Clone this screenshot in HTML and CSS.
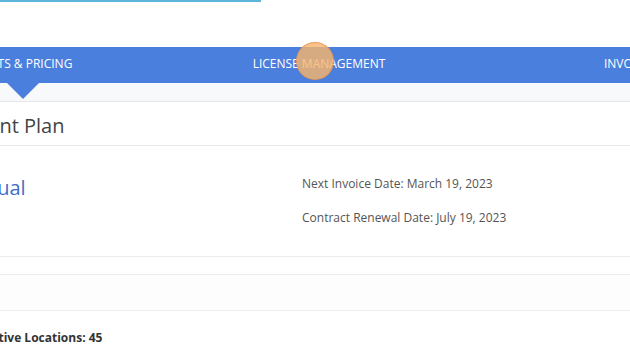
FILE: index.html
```html
<!DOCTYPE html>
<html lang="en">
<head>
<meta charset="UTF-8">
<title>Account</title>
<link rel="stylesheet" href="styles.css">
</head>
<body>
  <div class="progress"></div>

  <nav class="tabs">
    <a class="tab tab-first">Products &amp; Pricing</a>
    <a class="tab tab-mid">License Management</a>
    <a class="tab tab-last">Invoices</a>
  </nav>
  <div class="subbar">
    <span class="pointer"></span>
  </div>

  <div class="section-head">
    <h2>Current Plan</h2>
  </div>

  <div class="plan">
    <div class="plan-name">Annual</div>
    <div class="plan-dates">
      <p>Next Invoice Date: March 19, 2023</p>
      <p>Contract Renewal Date: July 19, 2023</p>
    </div>
  </div>

  <div class="gap-row"></div>
  <div class="shade-row"></div>

  <div class="locations">Active Locations: 45</div>

  <span class="click-dot"></span>
</body>
</html>
```

FILE: styles.css
```css
body {
    margin: 0;
    font-family: "Open Sans", "Noto Sans", sans-serif;
    background-color: #fff;
    color: #444;
    overflow: hidden;
}

.progress {
    width: 261px;
    height: 2px;
    background-color: #5fb4da;
}

.tabs {
    display: flex;
    margin-top: 45px;
    margin-left: -147px;
    height: 36px;
    background-color: #4b7fdd;
}

.tab {
    text-align: center;
    line-height: 34px;
    font-size: 12px;
    color: #fff;
    text-transform: uppercase;
}

.tab-first { flex: 0 0 315px; }
.tab-mid { flex: 0 0 302px; }
.tab-last { flex: 0 0 321px; }

.subbar {
    position: relative;
    height: 18px;
    background-color: #f8f9fa;
    border-bottom: 1px solid #e6e6e6;
}

.pointer {
    position: absolute;
    left: 7px;
    top: 0;
    width: 0;
    height: 0;
    border-left: 16px solid transparent;
    border-right: 16px solid transparent;
    border-top: 16px solid #4b7fdd;
}

.section-head {
    height: 43px;
    border-bottom: 1px solid #e8e8e8;
    display: flex;
    align-items: center;
}

.section-head h2 {
    margin: 3px 0 0 -53px;
    font-size: 20px;
    font-weight: 400;
    color: #444;
}

.plan {
    display: flex;
    height: 110px;
    border-bottom: 1px solid #ececec;
}

.plan-name {
    margin-left: -40px;
    width: 342px;
    padding-top: 28px;
    font-size: 20px;
    color: #3e6dc7;
}

.plan-dates {
    padding-top: 29px;
    font-size: 12px;
    color: #555;
}

.plan-dates p {
    margin: 0 0 17px;
    line-height: 17px;
}

.gap-row {
    height: 17px;
    border-bottom: 1px solid #ececec;
}

.shade-row {
    height: 35px;
    background-color: #fdfdfd;
    border-bottom: 1px solid #ececec;
}

.locations {
    margin-left: -16px;
    padding-top: 18px;
    font-size: 12px;
    font-weight: 700;
    color: #333;
}

.click-dot {
    position: absolute;
    left: 296px;
    top: 42px;
    width: 36px;
    height: 36px;
    border-radius: 50%;
    background-color: rgba(246, 180, 110, 0.82);
    border: 1px solid rgba(226, 146, 76, 0.8);
}
```
